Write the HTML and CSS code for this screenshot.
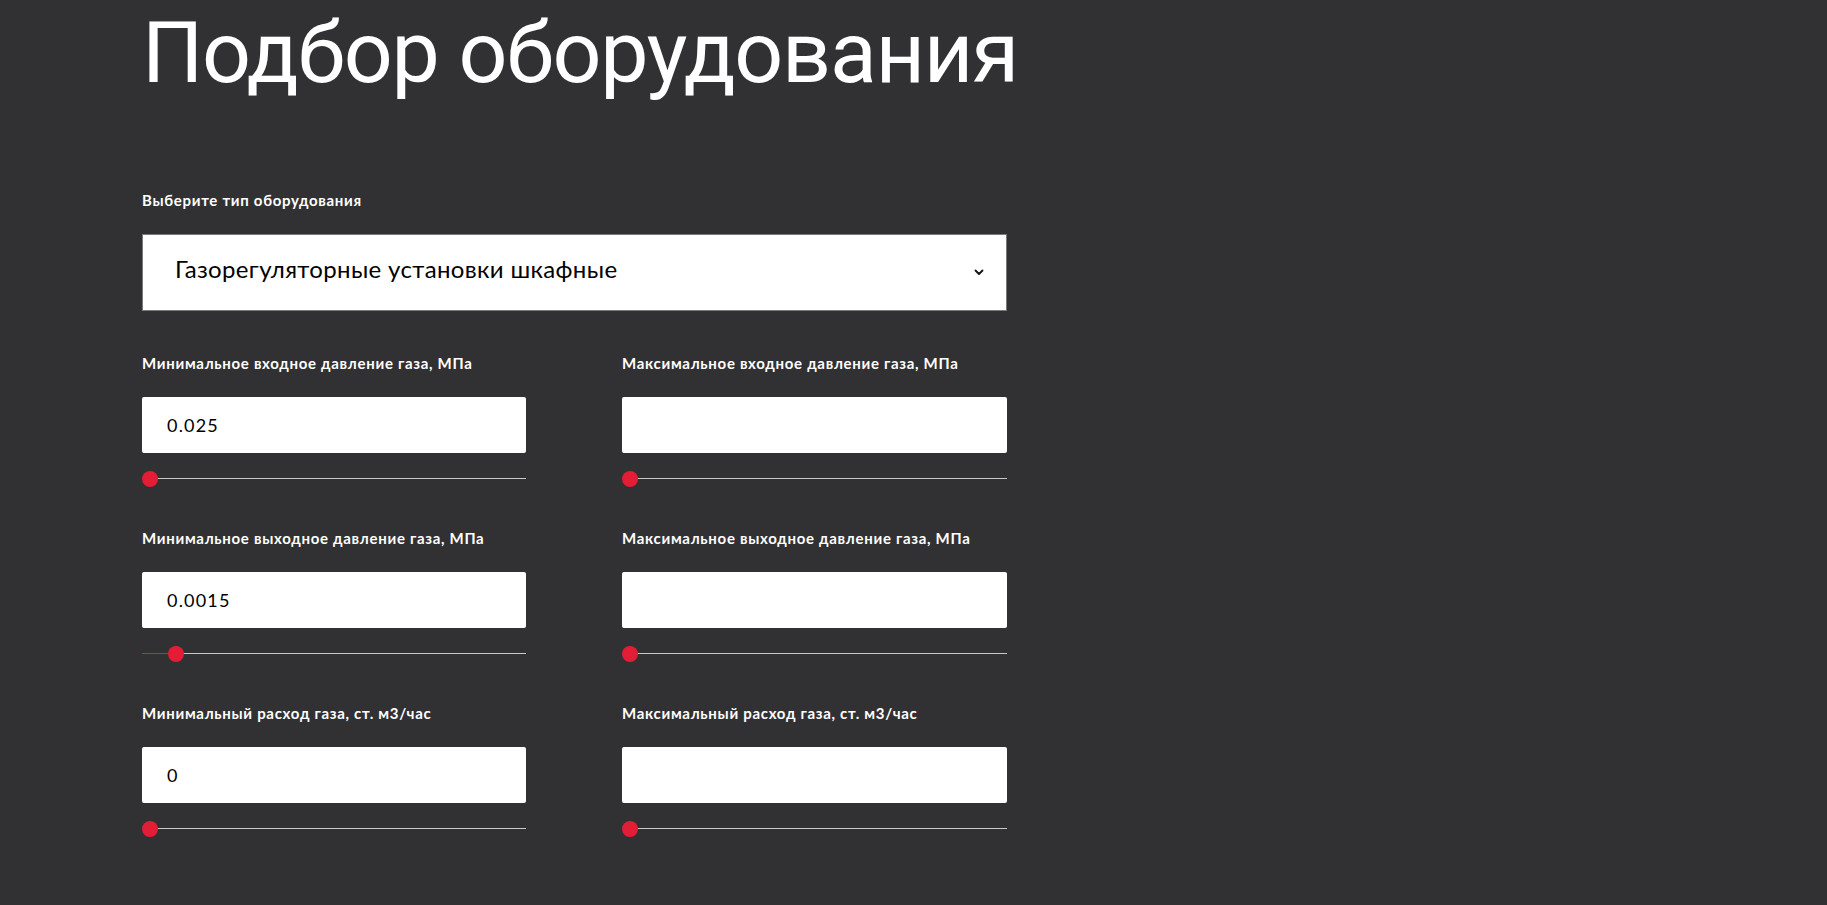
FILE: index.html
```html
<!DOCTYPE html>
<html lang="ru">
<head>
<meta charset="utf-8">
<title>Подбор оборудования</title>
<link rel="stylesheet" href="styles.css">
</head>
<body>
<main class="page">
  <h1 class="title">Подбор оборудования</h1>

  <div class="field-label">Выберите тип оборудования</div>
  <div class="select">
    <span class="select-text">Газорегуляторные установки шкафные</span>
    <svg class="chevron" width="10" height="7" viewBox="0 0 10 7"><path d="M1.5 1.5 L5 5 L8.5 1.5" fill="none" stroke="#111" stroke-width="1.8" stroke-linecap="round" stroke-linejoin="round"/></svg>
  </div>

  <div class="grid">
    <div class="cell">
      <div class="field-label">Минимальное входное давление газа, МПа</div>
      <div class="input">0.025</div>
      <div class="slider"><div class="fill" style="width:8px"></div><div class="thumb" style="left:0px"></div></div>
    </div>
    <div class="cell">
      <div class="field-label">Максимальное входное давление газа, МПа</div>
      <div class="input"></div>
      <div class="slider"><div class="fill" style="width:8px"></div><div class="thumb" style="left:0px"></div></div>
    </div>
    <div class="cell">
      <div class="field-label">Минимальное выходное давление газа, МПа</div>
      <div class="input">0.0015</div>
      <div class="slider"><div class="fill" style="width:34px"></div><div class="thumb" style="left:26px"></div></div>
    </div>
    <div class="cell">
      <div class="field-label">Максимальное выходное давление газа, МПа</div>
      <div class="input"></div>
      <div class="slider"><div class="fill" style="width:8px"></div><div class="thumb" style="left:0px"></div></div>
    </div>
    <div class="cell">
      <div class="field-label">Минимальный расход газа, ст. м3/час</div>
      <div class="input">0</div>
      <div class="slider"><div class="fill" style="width:8px"></div><div class="thumb" style="left:0px"></div></div>
    </div>
    <div class="cell">
      <div class="field-label">Максимальный расход газа, ст. м3/час</div>
      <div class="input"></div>
      <div class="slider"><div class="fill" style="width:8px"></div><div class="thumb" style="left:0px"></div></div>
    </div>
  </div>
</main>
</body>
</html>
```

FILE: styles.css
```css
html, body {
  margin: 0;
  padding: 0;
  background: #313133;
  min-height: 100%;
}
body {
  font-family: Lato, "Noto Sans", sans-serif;
  color: #ffffff;
}
.page {
  width: 865px;
  padding: 2px 0 0 142px;
}
.title {
  margin: 0 0 86px 0;
  font-family: Roboto, sans-serif;
  font-weight: 400;
  font-size: 86px;
  line-height: 102px;
  letter-spacing: -1.3px;
  white-space: nowrap;
  color: #ffffff;
}
.field-label {
  font-size: 15px;
  line-height: 20px;
  font-weight: 700;
  letter-spacing: 0.7px;
  color: #ffffff;
  margin-bottom: 24px;
}
.select {
  box-sizing: border-box;
  height: 77px;
  border: 1px solid #7a7a7a;
  background: #ffffff;
  display: flex;
  align-items: center;
  justify-content: space-between;
  padding: 0 22px 8px 32px;
  margin-bottom: 42px;
}
.select-text {
  font-size: 24px;
  letter-spacing: 0.35px;
  color: #000000;
}
.chevron {
  display: block;
  margin-top: 8px;
}
.grid {
  display: grid;
  grid-template-columns: 384px 385px;
  column-gap: 96px;
  row-gap: 41px;
}
.input {
  box-sizing: border-box;
  height: 56px;
  background: #ffffff;
  border-radius: 2px;
  color: #000000;
  font-size: 18px;
  letter-spacing: 1.2px;
  display: flex;
  align-items: center;
  padding-left: 25px;
  margin-bottom: 18px;
}
.slider {
  position: relative;
  height: 16px;
}
.slider::before {
  content: "";
  position: absolute;
  left: 0;
  right: 0;
  top: 7px;
  height: 1px;
  background: #c9c9c9;
}
.fill {
  position: absolute;
  left: 0;
  top: 7px;
  height: 1px;
  background: #e31d36;
}
.thumb {
  position: absolute;
  top: 0;
  width: 16px;
  height: 16px;
  border-radius: 50%;
  background: #e31d36;
}
```
